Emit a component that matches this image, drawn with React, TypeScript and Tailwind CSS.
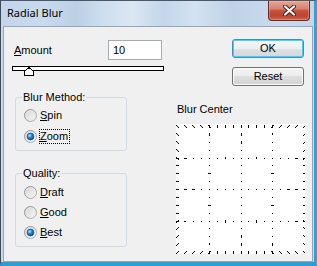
import React from "react";

function Radio({ checked }: { checked: boolean }) {
  return (
    <svg width="13" height="13" viewBox="0 0 13 13" className="shrink-0">
      <defs>
        <linearGradient id="rbFill" x1="0" y1="0" x2="1" y2="1">
          <stop offset="0" stopColor="#d2d2d2" />
          <stop offset="1" stopColor="#fafafa" />
        </linearGradient>
        <linearGradient id="rbRing" x1="0" y1="0" x2="1" y2="1">
          <stop offset="0" stopColor="#8a8a8a" />
          <stop offset="1" stopColor="#b4b4b4" />
        </linearGradient>
        <radialGradient id="rbDot" cx="0.38" cy="0.35" r="0.7">
          <stop offset="0" stopColor="#a8e8ff" />
          <stop offset="0.45" stopColor="#2a8cd4" />
          <stop offset="1" stopColor="#0c3f78" />
        </radialGradient>
      </defs>
      <circle cx="6.5" cy="6.5" r="6" fill="url(#rbFill)" stroke="url(#rbRing)" strokeWidth="1" />
      <circle cx="6.5" cy="6.5" r="4.6" fill="none" stroke="#e6e6e6" strokeWidth="0.8" />
      {checked && (
        <circle cx="6.5" cy="6.5" r="3.4" fill="url(#rbDot)" stroke="#164e8a" strokeWidth="0.7" />
      )}
    </svg>
  );
}

function BlurGrid() {
  const W = 129;
  const H = 130;
  const x0 = 1, x1 = 128, y0 = 2, y1 = 128;
  const cx = (x0 + x1) / 2;
  const cy = (y0 + y1) / 2;
  const pts = new Map<string, [number, number]>();
  for (let i = 0; i <= 4; i++) {
    const ly = Math.round(y0 + (i * (y1 - y0)) / 4);
    const lx = Math.round(x0 + (i * (x1 - x0)) / 4);
    for (let k = 0; k <= 16; k++) {
      const px = Math.round(x0 + (k * (x1 - x0)) / 16);
      const py = Math.round(y0 + (k * (y1 - y0)) / 16);
      pts.set(`${px},${ly}`, [px, ly]);
      pts.set(`${lx},${py}`, [lx, py]);
    }
  }
  const maxD = Math.hypot(x1 - cx, y1 - cy);
  const els: React.ReactNode[] = [];
  pts.forEach(([px, py], key) => {
    const dx = px - cx;
    const dy = py - cy;
    const d = Math.hypot(dx, dy);
    const L = 0.9 + 2.3 * (d / maxD);
    if (L < 1.6 || d < 0.5) {
      els.push(<rect key={key} x={px} y={py} width={1} height={1} fill="#000" />);
    } else {
      const ux = dx / d;
      const uy = dy / d;
      els.push(
        <line
          key={key}
          x1={px + 0.5 - (ux * L) / 2}
          y1={py + 0.5 - (uy * L) / 2}
          x2={px + 0.5 + (ux * L) / 2}
          y2={py + 0.5 + (uy * L) / 2}
          stroke="#000"
          strokeWidth="1"
        />
      );
    }
  });
  return (
    <div className="w-[129px] h-[130px] bg-white">
      <svg width={W} height={H} viewBox={`0 0 ${W} ${H}`} shapeRendering="crispEdges">
        {els}
      </svg>
    </div>
  );
}

function RadioRow({
  checked,
  mn,
  rest,
  focus,
  h,
}: {
  checked: boolean;
  mn: string;
  rest: string;
  focus?: boolean;
  h: string;
}) {
  return (
    <div className={`flex items-center gap-[2px] ${h}`}>
      <Radio checked={checked} />
      {focus ? (
        <span className="border border-dotted border-black leading-[13px] pr-[1px]">
          <span className="underline underline-offset-[1px]">{mn}</span>
          {rest}
        </span>
      ) : (
        <span className="leading-[13px] border border-transparent">
          <span className="underline underline-offset-[1px]">{mn}</span>
          {rest}
        </span>
      )}
    </div>
  );
}

export default function App() {
  return (
    <div className="w-[317px] h-[266px] flex flex-col overflow-hidden border-l border-t border-l-[#3f4a58] border-t-[#4c5765] border-r-[3px] border-r-[#2fa3d8] border-b-[4px] border-b-[#2b9fd4] bg-[#c8d9ec] font-['Liberation_Sans',Arial,sans-serif] text-[11px] text-black">
      {/* Title bar */}
      <div className="h-[25px] shrink-0 flex items-start bg-[linear-gradient(90deg,#c2d5ea_0%,#c9daed_14%,#bbcfe6_24%,#cfdff0_33%,#dae7f4_42%,#c3d6ea_52%,#d3e2f1_62%,#bfd2e8_74%,#cadbee_88%,#c4d6ea_100%)]">
        <span className="ml-[6px] mt-[4px] font-['Noto_Sans',sans-serif] text-[11px] leading-[15px] text-black">
          Radial Blur
        </span>
        <div className="ml-auto mr-[4px] w-[42px] h-[20px] rounded-b-[4px] border border-t-0 border-[#6b2a20] bg-[linear-gradient(180deg,#e6a597_0%,#d88272_40%,#c44f3b_52%,#bf4330_78%,#d0644a_100%)] shadow-[inset_0_0_0_1px_rgba(255,200,190,0.35)] flex items-center justify-center">
          <svg width="13" height="11" viewBox="0 0 13 11">
            <path d="M2 1.5 L11 9.5 M11 1.5 L2 9.5" stroke="#5a1c14" strokeWidth="4.2" strokeLinecap="round" />
            <path d="M2 1.5 L11 9.5 M11 1.5 L2 9.5" stroke="#ffffff" strokeWidth="2.2" strokeLinecap="round" />
          </svg>
        </div>
      </div>

      {/* Frame + content */}
      <div className="flex-1 pl-[2px] pr-[1px] min-h-0">
        <div className="h-full border border-[#97a5b5] bg-[#f0f0f0] flex pl-[8px]">
          {/* Left column */}
          <div className="w-[152px] flex flex-col">
            <div className="mt-[13px] h-[20px] flex items-center">
              <span className="ml-[2px] leading-[13px]">
                <span className="underline underline-offset-[1px]">A</span>mount
              </span>
              <div className="ml-auto mr-[2px] w-[54px] h-[20px] border border-[#a5acb5] bg-white pl-[4px] flex items-center leading-[13px]">
                10
              </div>
            </div>

            <div className="mt-[6px] relative h-[5px] border border-black bg-white">
              <svg
                width="10"
                height="9"
                viewBox="0 0 10 9"
                className="absolute left-[11px] top-0"
                shapeRendering="crispEdges"
              >
                <path d="M0.5 8.5 L0.5 4.5 L5 0.5 L9.5 4.5 L9.5 8.5 Z" fill="#ffffff" stroke="#000" strokeWidth="1" />
              </svg>
            </div>

            <fieldset className="mt-[20px] ml-[3px] w-[112px] border border-[#d3dbe1] rounded-[3px] px-[8px] pb-[3px]">
              <legend className="ml-[-2px] px-[1px] leading-[13px]">Blur Method:</legend>
              <div className="mt-[1px]">
                <RadioRow checked={false} mn="S" rest="pin" h="h-[21px]" />
                <RadioRow checked={true} mn="Z" rest="oom" focus h="h-[21px]" />
              </div>
            </fieldset>

            <fieldset className="mt-[16px] ml-[3px] w-[112px] border border-[#d3dbe1] rounded-[3px] px-[8px] pb-[4px]">
              <legend className="ml-[-2px] px-[1px] leading-[13px]">Quality:</legend>
              <div className="mt-[2px]">
                <RadioRow checked={false} mn="D" rest="raft" h="h-[20px]" />
                <RadioRow checked={false} mn="G" rest="ood" h="h-[20px]" />
                <RadioRow checked={true} mn="B" rest="est" h="h-[20px]" />
              </div>
            </fieldset>
          </div>

          {/* Right column */}
          <div className="w-[129px] ml-[12px] flex flex-col">
            <div className="mt-[12px] flex flex-col items-end pr-[1px] gap-[9px]">
              <button className="w-[72px] h-[19px] rounded-[3px] border border-[#3a8fc0] bg-[linear-gradient(180deg,#f4f6f8_0%,#eceef0_50%,#dfe2e5_50%,#d4d8dc_100%)] shadow-[inset_0_0_0_1px_#45d2f8] flex items-center justify-center leading-[13px] text-[11px]">
                OK
              </button>
              <button className="w-[72px] h-[19px] rounded-[3px] border border-[#707070] bg-[linear-gradient(180deg,#f3f3f3_0%,#ececec_50%,#dedede_50%,#d2d2d2_100%)] shadow-[inset_0_0_0_1px_#fbfbfb] flex items-center justify-center leading-[13px] text-[11px]">
                Reset
              </button>
            </div>
            <div className="mt-[17px] ml-[1px] leading-[13px]">Blur Center</div>
            <div className="mt-[8px]">
              <BlurGrid />
            </div>
          </div>
        </div>
      </div>
    </div>
  );
}
